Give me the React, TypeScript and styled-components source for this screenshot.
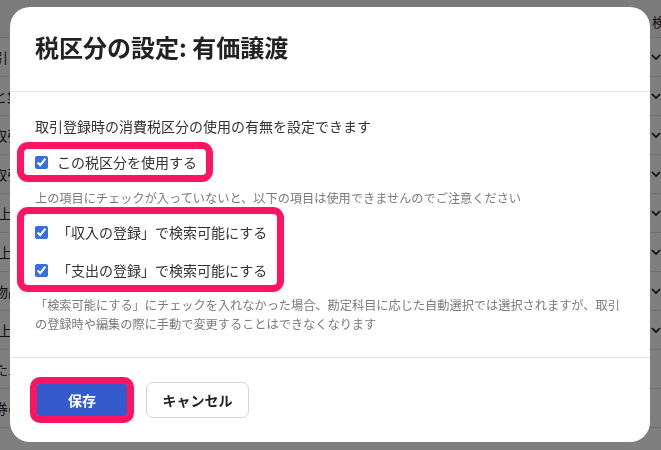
import React from "react";
import styled, { createGlobalStyle } from "styled-components";

const Global = createGlobalStyle`
  html, body { margin: 0; padding: 0; background: #fff; }
  body { font-family: "Noto Sans CJK JP", "Noto Sans", sans-serif; }
  * { box-sizing: border-box; }
`;

const Page = styled.div`
  width: 661px;
  height: 450px;
  overflow: hidden;
  background: #fff;
  color: #222;
  font-size: 14px;
`;

const TableHead = styled.div`
  height: 38px;
  display: flex;
  align-items: center;
  justify-content: space-between;
  border-bottom: 1px solid #dcdcdc;
  background: #f7f7f7;
`;

const Row = styled.div`
  height: 40px;
  display: flex;
  align-items: center;
  justify-content: space-between;
  border-bottom: 1px solid #dcdcdc;
  margin-top: -1px;
  &:first-of-type { margin-top: 0; }
`;

const LeftText = styled.span<{ $shift: number }>`
  margin-left: ${(p) => p.$shift}px;
  white-space: nowrap;
  line-height: 20px;
`;

const RightCell = styled.span`
  width: 10px;
  display: flex;
  justify-content: flex-start;
  white-space: nowrap;
  overflow: visible;
`;

const HeadText = styled.span`
  font-size: 13px;
  line-height: 18px;
  width: 9px;
  white-space: nowrap;
  overflow: visible;
  margin-top: 6px;
`;

const Overlay = styled.div`
  position: fixed;
  inset: 0;
  background: rgba(0, 0, 0, 0.5);
`;

const Modal = styled.div`
  position: fixed;
  left: 10px;
  top: 7px;
  width: 640px;
  height: 435px;
  background: #fff;
  border-radius: 20px;
  display: flex;
  flex-direction: column;
  overflow: hidden;
`;

const Header = styled.div`
  padding: 24px 25px 28px;
  border-bottom: 1px solid #e4e4e4;
`;

const Title = styled.h2`
  margin: 0;
  font-size: 24px;
  line-height: 32px;
  font-weight: 700;
  color: #222;
`;

const Body = styled.div`
  padding: 24px 25px 23px;
  border-bottom: 1px solid #e4e4e4;
  display: flex;
  flex-direction: column;
  align-items: flex-start;
`;

const Intro = styled.p`
  margin: 0;
  font-size: 14px;
  line-height: 20px;
  color: #333;
`;

const Highlight = styled.div<{ $pt: number; $pb: number; $pr: number; $mt: number }>`
  margin: ${(p) => p.$mt}px 0 0 -18px;
  border: 7px solid #ff1463;
  border-radius: 11px;
  padding: ${(p) => p.$pt}px ${(p) => p.$pr}px ${(p) => p.$pb}px 11px;
  display: flex;
  flex-direction: column;
  gap: 10px;
`;

const CheckRow = styled.label<{ $h: number }>`
  height: ${(p) => p.$h}px;
  display: flex;
  align-items: center;
  gap: 9px;
  font-size: 14px;
  color: #333;
  white-space: nowrap;
`;

const Check = styled.input`
  margin: 0;
  width: 13px;
  height: 13px;
  accent-color: #3570e3;
`;

const Note = styled.p<{ $mt: number; $lh: number }>`
  margin: ${(p) => p.$mt}px 0 0;
  font-size: 12.2px;
  line-height: ${(p) => p.$lh}px;
  color: #7a7a7a;
  width: 590px;
`;

const Footer = styled.div`
  padding: 19px 20px 18px;
  display: flex;
  align-items: center;
  gap: 12px;
`;

const SaveFrame = styled.div`
  border: 7px solid #ff1463;
  border-radius: 10px;
  display: flex;
`;

const SaveButton = styled.button`
  width: 90px;
  height: 32px;
  border: none;
  border-radius: 2px;
  background: #345bcc;
  color: #fff;
  font-family: inherit;
  font-size: 14px;
  font-weight: 700;
  padding: 0;
`;

const CancelButton = styled.button`
  width: 103px;
  height: 36px;
  border: 1px solid #d4d4d4;
  border-radius: 7px;
  background: #fff;
  color: #222;
  font-family: inherit;
  font-size: 14px;
  font-weight: 700;
  padding: 0;
`;

const Chevron = () => (
  <svg width="10" height="8" viewBox="0 0 10 8">
    <path d="M1 2 L5 6 L9 2" fill="none" stroke="#111" strokeWidth="1.6" />
  </svg>
);

const rows: { text: string; shift: number; chevron: boolean }[] = [
  { text: "取引", shift: -20, chevron: true },
  { text: "と集計", shift: -7, chevron: true },
  { text: "取引", shift: -7, chevron: true },
  { text: "取引", shift: -7, chevron: true },
  { text: "売上", shift: -16, chevron: true },
  { text: "売上", shift: -16, chevron: true },
  { text: "物品", shift: -6, chevron: true },
  { text: "売上", shift: -16, chevron: true },
  { text: "た10", shift: -6, chevron: false },
  { text: "券の", shift: -6, chevron: false },
];

export default function App() {
  return (
    <>
      <Global />
      <Page>
        <TableHead>
          <span />
          <HeadText>検</HeadText>
        </TableHead>
        {rows.map((r, i) => (
          <Row key={i}>
            <LeftText $shift={r.shift}>{r.text}</LeftText>
            <RightCell>{r.chevron ? <Chevron /> : null}</RightCell>
          </Row>
        ))}
      </Page>
      <Overlay />
      <Modal role="dialog">
        <Header>
          <Title>税区分の設定: 有価譲渡</Title>
        </Header>
        <Body>
          <Intro>取引登録時の消費税区分の使用の有無を設定できます</Intro>
          <Highlight $mt={6} $pt={0} $pb={0} $pr={9}>
            <CheckRow $h={26}>
              <Check type="checkbox" defaultChecked />
              この税区分を使用する
            </CheckRow>
          </Highlight>
          <Note $mt={7} $lh={18}>
            上の項目にチェックが入っていないと、以下の項目は使用できませんのでご注意ください
          </Note>
          <Highlight $mt={0} $pt={4} $pb={1} $pr={10}>
            <CheckRow $h={28}>
              <Check type="checkbox" defaultChecked />
              「収入の登録」で検索可能にする
            </CheckRow>
            <CheckRow $h={28}>
              <Check type="checkbox" defaultChecked />
              「支出の登録」で検索可能にする
            </CheckRow>
          </Highlight>
          <Note $mt={4} $lh={19}>
            「検索可能にする」にチェックを入れなかった場合、勘定科目に応じた自動選択では選択されますが、取引の登録時や編集の際に手動で変更することはできなくなります
          </Note>
        </Body>
        <Footer>
          <SaveFrame>
            <SaveButton>保存</SaveButton>
          </SaveFrame>
          <CancelButton>キャンセル</CancelButton>
        </Footer>
      </Modal>
    </>
  );
}
